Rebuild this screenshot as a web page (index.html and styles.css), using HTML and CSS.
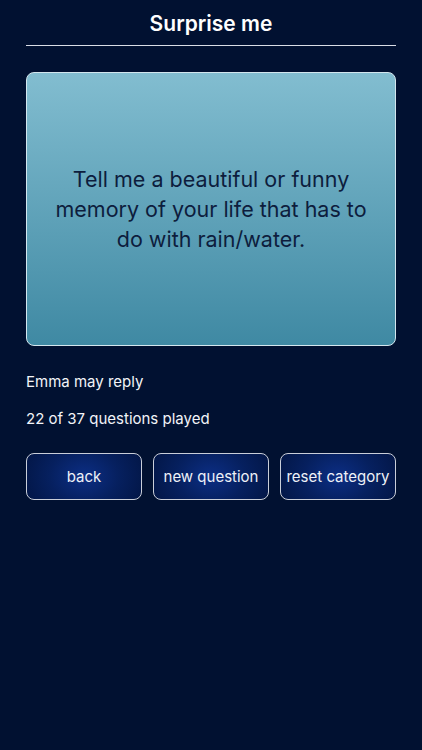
FILE: index.html
```html
<!DOCTYPE html>
<html lang="en">
<head>
    <meta charset="UTF-8">
    <meta name="viewport" content="width=device-width, initial-scale=1.0">
    <title>Surprise me</title>
    <link rel="stylesheet" href="styles.css">
</head>
<body>

    <div class="screen">
        <div class="header">
            <h1>Surprise me</h1>
        </div>

        <div class="card">
            <p>Tell me a beautiful or funny memory of your life that has to do with rain/water.</p>
        </div>

        <p class="info first">Emma may reply</p>
        <p class="info">22 of 37 questions played</p>

        <div class="actions">
            <button>back</button>
            <button>new question</button>
            <button>reset category</button>
        </div>
    </div>

</body>
</html>
```

FILE: styles.css
```css
html, body {
    height: 100%;
}
body {
    margin: 0;
    padding: 0;
    background-color: #011131;
    font-family: Inter, "Noto Sans", sans-serif;
    color: #f2f4f8;
}
.screen {
    padding: 0 26px;
}
.header {
    height: 45px;
    border-bottom: 1px solid #d9dde6;
    display: flex;
    align-items: center;
    justify-content: center;
}
h1 {
    margin: 2px 0 0;
    font-size: 21px;
    font-weight: 600;
    color: #fff;
}
.card {
    margin-top: 26px;
    height: 272px;
    border: 1px solid #d3e6ee;
    border-radius: 8px;
    background: linear-gradient(to bottom, #82bdd0, #3f89a3);
    display: flex;
    align-items: center;
    justify-content: center;
    padding: 0 20px;
}
.card p {
    margin: 0;
    text-align: center;
    font-size: 21.5px;
    line-height: 30px;
    color: #0d1d3d;
}
.info {
    margin: 0;
    font-size: 15px;
    line-height: 20px;
}
.info.first {
    margin-top: 26px;
    margin-bottom: 17px;
}
.actions {
    margin-top: 24px;
    display: grid;
    grid-template-columns: 1fr 1fr 1fr;
    gap: 11px;
}
.actions button {
    height: 47px;
    padding: 0;
    border: 1.5px solid #c9ced9;
    border-radius: 8px;
    background: radial-gradient(ellipse 60% 120% at center, #0c2e84 0%, #06205f 50%, #021543 100%);
    color: #eef1f7;
    font-family: inherit;
    font-size: 15px;
    cursor: pointer;
}
```
